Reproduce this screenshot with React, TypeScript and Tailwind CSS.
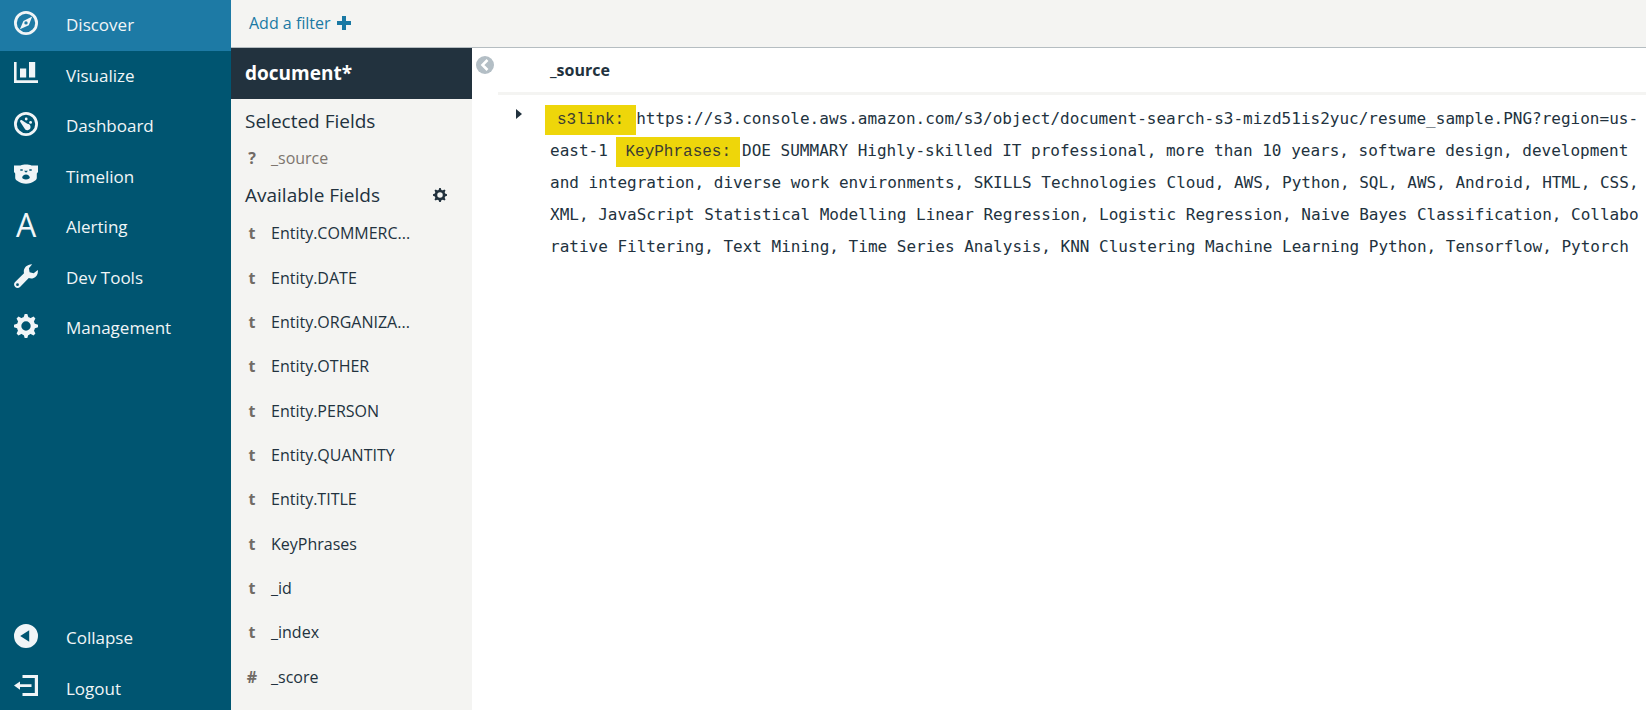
import type { ReactNode } from 'react';

const iconClass = 'block size-6';

function CompassIcon() {
  return (
    <svg viewBox="0 0 24 24" className={iconClass} aria-hidden="true">
      <circle cx="12" cy="12" r="10.6" fill="none" stroke="currentColor" strokeWidth="2.8" />
      <path fill="currentColor" fillRule="evenodd" d="M18.200 5.600 14.800 14.200 5.900 18.300l3.500-8.400Zm-6.200 4.600a1.700 1.700 0 1 0 0 3.400 1.700 1.700 0 0 0 0-3.400Z" />
    </svg>
  );
}

function ChartIcon() {
  return (
    <svg viewBox="0 0 24 24" className={iconClass} aria-hidden="true">
      <path fill="currentColor" d="M0 1h2.600v18.200H24V22H0ZM6 7.500h6.200v9H6ZM15 1h6.200v15.500H15Z" />
    </svg>
  );
}

function GaugeIcon() {
  return (
    <svg viewBox="0 0 24 24" className={iconClass} aria-hidden="true">
      <circle cx="12" cy="12" r="10.6" fill="none" stroke="currentColor" strokeWidth="2.8" />
      <path fill="currentColor" d="M6.2 8.6c.4-.6 1.1-.7 1.700-.3l5.400 3.500a3.200 3.200 0 1 1-2.900 4.500L6.500 10.300c-.6-.6-.7-1.200-.3-1.700Z" />
      <circle cx="12.200" cy="7" r="1.400" fill="currentColor" />
      <circle cx="16.600" cy="10.400" r="1.400" fill="currentColor" />
    </svg>
  );
}

function BearIcon() {
  return (
    <svg viewBox="0 0 24 24" className={iconClass} aria-hidden="true">
      <path
        fill="currentColor"
        fillRule="evenodd"
        d="M0 3.500h6.500C8 2.700 10 2.400 12 2.400s4 .3 5.500 1.100H24V10l-1.200 1.500v4.200c0 1.300-.8 2.300-2 3.100C18.500 20.600 15 21.700 12 21.700s-6.500-1.100-8.800-2.900c-1.200-.8-2-1.800-2-3.100v-4.200L0 10ZM6.300 7.300v1.500h2.400V7.300Zm9 0v1.500h2.400V7.300ZM10 8.800l2 2 2-2ZM8.200 15.600c0 1.200 1.300 1.800 3.800 1.800s3.800-.6 3.800-1.800c0-1.500-1.700-3-3.800-3s-3.800 1.500-3.800 3Z"
      />
    </svg>
  );
}

function WrenchIcon() {
  return (
    <svg viewBox="0 0 24 24" className={iconClass} aria-hidden="true">
      <path
        fill="currentColor"
        fillRule="evenodd"
        d="M18.200.2 14.900 4.300l.7 4 4.100.9 4.100-3.100c.6 3.800-1.300 7.200-4.700 8.200-1.500.4-3 .3-4.300-.2L6 22.900c-1.300 1.300-3.400 1.400-4.800.1-1.500-1.300-1.500-3.600-.1-4.900L10 9.300C9 5 11.800.3 18.200.2ZM3.500 19.300a1.400 1.400 0 1 0 0 2.800 1.400 1.400 0 0 0 0-2.800Z"
      />
    </svg>
  );
}

function GearIcon({ className }: { className: string }) {
  return (
    <svg viewBox="0 0 24 24" className={className} aria-hidden="true">
      <g fill="currentColor">
        <path fillRule="evenodd" d="M12 2.800a9.200 9.200 0 1 0 0 18.400 9.200 9.200 0 0 0 0-18.400Zm0 4.500a4.700 4.700 0 1 1 0 9.400 4.700 4.700 0 0 1 0-9.400Z" />
        {[0, 45, 90, 135, 180, 225, 270, 315].map((angle) => (
          <path key={angle} d="M10.700 0h2.600l1.500 4.500H9.200Z" transform={`rotate(${angle} 12 12)`} />
        ))}
      </g>
    </svg>
  );
}

function CollapseIcon() {
  return (
    <svg viewBox="0 0 24 24" className={iconClass} aria-hidden="true">
      <path fill="currentColor" fillRule="evenodd" d="M12 0a12 12 0 1 0 0 24 12 12 0 0 0 0-24Zm3.200 6.200v11.600L6.200 12Z" />
    </svg>
  );
}

function LogoutIcon() {
  return (
    <svg viewBox="0 0 24 24" className={iconClass} aria-hidden="true">
      <path fill="currentColor" d="M8.500 1H24v21H8.500v-3h12.300V4H8.500ZM6 7.500v2.700h11.500V13H6v2.700l-6-4.200Z" />
    </svg>
  );
}

function NavItem({ icon, label, active = false }: { icon: ReactNode; label: string; active?: boolean }) {
  return (
    <li className="flex">
      <a
        href="#"
        aria-current={active ? 'page' : undefined}
        className={`flex flex-1 items-center gap-7 pb-px pl-[14px] ${active ? 'bg-[#1d7aa5]' : ''}`}
      >
        <span className="flex w-6 justify-center pb-1">{icon}</span>
        <span>{label}</span>
      </a>
    </li>
  );
}

const fields = [
  ['t', 'Entity.COMMERC...'],
  ['t', 'Entity.DATE'],
  ['t', 'Entity.ORGANIZA...'],
  ['t', 'Entity.OTHER'],
  ['t', 'Entity.PERSON'],
  ['t', 'Entity.QUANTITY'],
  ['t', 'Entity.TITLE'],
  ['t', 'KeyPhrases'],
  ['t', '_id'],
  ['t', '_index'],
  ['#', '_score'],
];

function TypeMark({ children }: { children: ReactNode }) {
  return <span className="w-3 text-center font-bold text-[#716b66]">{children}</span>;
}

export default function App() {
  return (
    <div className="flex h-screen overflow-hidden bg-white font-['Open_Sans',sans-serif] text-base text-[#22323e]">
      <nav className="flex w-[231px] shrink-0 flex-col justify-between bg-[#005571] text-[17px] text-[#f1f5f7]">
        <ul className="grid h-[354px] auto-rows-fr">
          <NavItem icon={<CompassIcon />} label="Discover" active />
          <NavItem icon={<ChartIcon />} label="Visualize" />
          <NavItem icon={<GaugeIcon />} label="Dashboard" />
          <NavItem icon={<BearIcon />} label="Timelion" />
          <NavItem
            icon={<span className="text-[32px] leading-6" aria-hidden="true">A</span>}
            label="Alerting"
          />
          <NavItem icon={<WrenchIcon />} label="Dev Tools" />
          <NavItem icon={<GearIcon className={iconClass} />} label="Management" />
        </ul>
        <ul className="-mb-1 grid h-[101px] auto-rows-fr">
          <NavItem icon={<CollapseIcon />} label="Collapse" />
          <NavItem icon={<LogoutIcon />} label="Logout" />
        </ul>
      </nav>

      <div className="flex min-w-0 flex-1 flex-col">
        <div className="flex h-12 shrink-0 items-center border-b border-[#b5bdc1] bg-[#f4f4f2] pb-[2px] pl-[18px]">
          <button type="button" className="flex items-center gap-[6px] text-[#1a79a4]">
            Add a filter
            <svg viewBox="0 0 14 14" className="size-[14px]" aria-hidden="true">
              <path fill="currentColor" d="M5 0h4v5h5v4H9v5H5V9H0V5h5Z" />
            </svg>
          </button>
        </div>

        <div className="flex min-h-0 flex-1">
          <aside className="w-[241px] shrink-0 bg-[#f4f4f2]">
            <h1 className="flex h-[51px] items-center bg-[#22323e] pl-[14px] text-[19px] font-bold text-white">document*</h1>
            <h2 className="flex h-11 items-center pl-[14px] text-[19px]">Selected Fields</h2>
            <div className="mb-[6px] flex h-[30px] items-center gap-[13px] pl-[15px] text-[#7d766f]">
              <TypeMark>?</TypeMark>
              <span>_source</span>
            </div>
            <div className="flex h-8 items-center justify-between pr-[25px] pl-[14px]">
              <h2 className="text-[19px]">Available Fields</h2>
              <button type="button" aria-label="Field settings">
                <GearIcon className="block size-[14px]" />
              </button>
            </div>
            <ul className="grid h-[488px] auto-rows-fr">
              {fields.map(([type, name]) => (
                <li key={name} className="flex items-center gap-[13px] pl-[15px]">
                  <TypeMark>{type}</TypeMark>
                  <span>{name}</span>
                </li>
              ))}
            </ul>
          </aside>

          <main className="flex min-w-0 flex-1 items-start">
            <button type="button" aria-label="Collapse sidebar" className="mt-2 ml-1 shrink-0">
              <svg viewBox="0 0 18 18" className="block size-[18px]" aria-hidden="true">
                <circle cx="9" cy="9" r="9" fill="#b3bec5" />
                <path d="M11.500 4 6.500 9l5 5" fill="none" stroke="#fff" strokeWidth="2.600" />
              </svg>
            </button>
            <table className="ml-1 flex-1 border-collapse">
              <thead>
                <tr className="h-[45px] border-b-3 border-[#f4f4f2]">
                  <th className="w-[52px]" aria-label="Expand" />
                  <th className="text-left font-bold">_source</th>
                </tr>
              </thead>
              <tbody>
                <tr className="align-top">
                  <td className="pt-[14px] pl-[18px]">
                    <button type="button" aria-label="Expand row" className="block">
                      <svg viewBox="0 0 6 10" className="block h-[10px] w-[6px]" aria-hidden="true">
                        <path fill="currentColor" d="M0 0 6 5 0 10Z" />
                      </svg>
                    </button>
                  </td>
                  <td className="pt-2 font-['DejaVu_Sans_Mono',monospace] leading-8 break-all">
                    <mark className="mt-[2px] -ml-[5px] inline-block bg-[#eed60a] px-3 align-top font-['Liberation_Mono',monospace] leading-[30px] text-[#3c3d33]">s3link:</mark>
                    https://s3.console.aws.amazon.com/s3/object/document-search-s3-mizd51is2yuc/resume_sample.PNG?region=us-east-1{' '}
                    <mark className="mt-[2px] mr-[2px] -ml-px inline-block bg-[#eed60a] px-[9px] align-top font-['Liberation_Mono',monospace] leading-[30px] text-[#3c3d33]">KeyPhrases:</mark>
                    DOE SUMMARY Highly-skilled IT professional, more than 10 years, software design, development and
                    integration, diverse work environments, SKILLS Technologies Cloud, AWS, Python, SQL, AWS, Android,
                    HTML, CSS, XML, JavaScript Statistical Modelling Linear Regression, Logistic Regression, Naive Bayes
                    Classification, Collaborative Filtering, Text Mining, Time Series Analysis, KNN Clustering Machine
                    Learning Python, Tensorflow, Pytorch
                  </td>
                </tr>
              </tbody>
            </table>
          </main>
        </div>
      </div>
    </div>
  );
}
